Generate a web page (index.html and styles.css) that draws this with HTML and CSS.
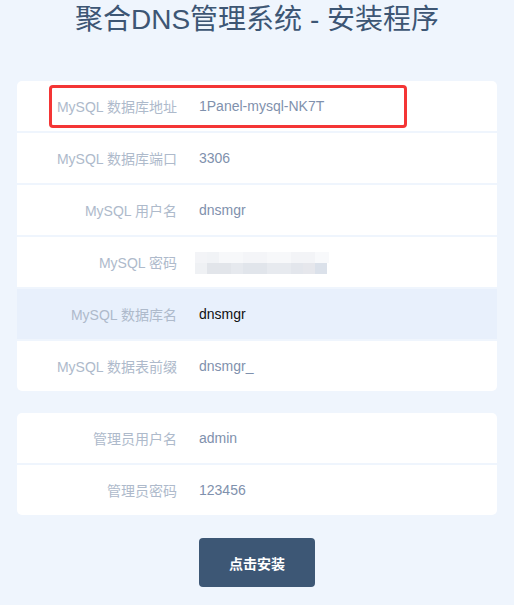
FILE: index.html
```html
<!DOCTYPE html>
<html lang="zh-CN">
<head>
<meta charset="utf-8">
<title>聚合DNS管理系统 - 安装程序</title>
<link rel="stylesheet" href="styles.css">
</head>
<body>
<div class="page">
  <h1 class="title">聚合DNS管理系统 - 安装程序</h1>
  <div class="card">
    <div class="row"><span class="label">MySQL 数据库地址</span><span class="value">1Panel-mysql-NK7T</span></div>
    <div class="row"><span class="label">MySQL 数据库端口</span><span class="value">3306</span></div>
    <div class="row"><span class="label">MySQL 用户名</span><span class="value">dnsmgr</span></div>
    <div class="row"><span class="label">MySQL 密码</span><span class="blur"><span class="blur-top"></span><span class="blur-bottom"></span></span></div>
    <div class="row row-active"><span class="label">MySQL 数据库名</span><span class="value value-active">dnsmgr</span></div>
    <div class="row"><span class="label">MySQL 数据表前缀</span><span class="value">dnsmgr_</span></div>
  </div>
  <div class="card">
    <div class="row"><span class="label">管理员用户名</span><span class="value">admin</span></div>
    <div class="row"><span class="label">管理员密码</span><span class="value">123456</span></div>
  </div>
  <div class="actions"><button class="btn">点击安装</button></div>
  <div class="highlight"></div>
</div>
</body>
</html>
```
FILE: styles.css
```css
html, body {
  margin: 0;
  padding: 0;
  background: #eff5fd;
}
body {
  font-family: "Liberation Sans", "Noto Sans CJK SC", sans-serif;
}
.page {
  position: relative;
  width: 480px;
  margin: 0 auto;
  padding: 0 0 10px;
}
.title {
  margin: 0 -20px 41px;
  font-size: 28px;
  font-weight: normal;
  line-height: 40px;
  text-align: center;
  color: #3d5674;
  white-space: nowrap;
}
.card {
  display: flex;
  flex-direction: column;
  gap: 2px;
  border-radius: 5px;
  overflow: hidden;
  margin-bottom: 22px;
}
.row {
  display: grid;
  grid-template-columns: 160px 1fr;
  column-gap: 22px;
  align-items: center;
  height: 50px;
  background: #ffffff;
  font-size: 14px;
}
.row-active {
  background: #e8f0fc;
}
.label {
  text-align: right;
  color: #aebacb;
  white-space: nowrap;
}
.value {
  color: #7f91ad;
}
.value-active {
  color: #111111;
}
.blur {
  display: flex;
  flex-direction: column;
  width: 134px;
  margin-left: -4px;
  margin-top: 1px;
}
.blur-top {
  height: 11px;
  background: linear-gradient(90deg, #f3f4f7 0 12px, #f1f3f6 12px 24px, #f7f8fa 24px 48px, #f4f5f8 48px 72px, #f7f8fa 72px 96px, #f3f4f7 96px 120px, #f8f9fb 120px 134px);
}
.blur-bottom {
  height: 11px;
  width: 132px;
  background: linear-gradient(90deg, #eff1f4 0 12px, #e2e5ea 12px 36px, #e6e9ee 36px 48px, #e1e5eb 48px 72px, #e7eaef 72px 96px, #e3e6ec 96px 108px, #e6e7ec 108px 120px, #dbe1ea 120px 132px);
}
.actions {
  display: flex;
  justify-content: center;
  padding-top: 1px;
}
.btn {
  width: 116px;
  height: 49px;
  border: none;
  border-radius: 4px;
  background: #3d5775;
  color: #ffffff;
  font-family: "Liberation Sans", "Noto Sans CJK SC", sans-serif;
  font-size: 14px;
  font-weight: bold;
  cursor: pointer;
}
.highlight {
  position: absolute;
  left: 32px;
  top: 85px;
  width: 352px;
  height: 37px;
  border: 3px solid #f43535;
  border-radius: 4px;
}
```
